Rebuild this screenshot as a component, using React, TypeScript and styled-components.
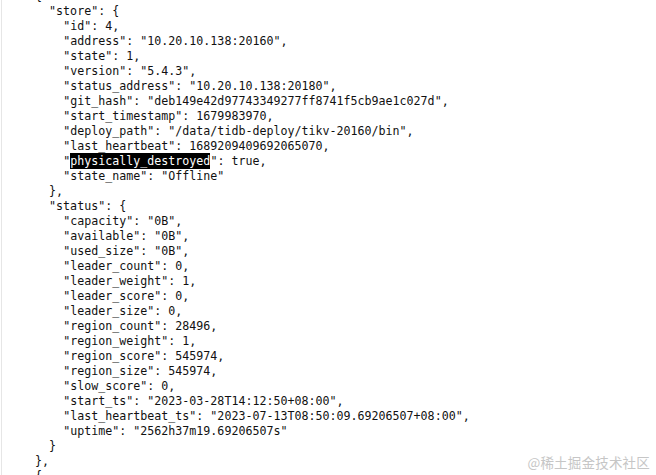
import React from "react";
import styled, { createGlobalStyle } from "styled-components";

const Global = createGlobalStyle`
  html, body { margin: 0; padding: 0; background: #ffffff; }
  #root { width: 656px; height: 475px; }
`;

const Viewer = styled.div`
  position: relative;
  width: 656px;
  height: 475px;
  overflow: hidden;
  background: #ffffff;
  box-sizing: border-box;
  border-left: 1px solid transparent;
  display: flex;
`;

const Rule = styled.div`
  width: 1px;
  background: #e6e6e6;
  flex: none;
`;

const Code = styled.div`
  flex: 1;
  margin-top: -11.5px;
  padding-left: 33px;
  font-family: "DejaVu Sans Mono", "Liberation Mono", monospace;
  font-size: 11.65px;
  line-height: 15px;
  color: #111111;
  white-space: pre;
`;

const Line = styled.div<{ $indent: number }>`
  height: 15px;
  padding-left: ${(p) => p.$indent * 14.1}px;
`;

const Selected = styled.span`
  background: #000000;
  color: #ffffff;
  padding: 1px 0;
`;

const Watermark = styled.div`
  position: absolute;
  right: 6px;
  bottom: 3px;
  font-family: "Noto Sans CJK SC", "Noto Sans", sans-serif;
  font-size: 13.5px;
  color: #c6c6c6;
  letter-spacing: 0.2px;
`;

type L = { i: number; t: React.ReactNode };

const lines: L[] = [
  { i: 0, t: "{" },
  { i: 1, t: '"store": {' },
  { i: 2, t: '"id": 4,' },
  { i: 2, t: '"address": "10.20.10.138:20160",' },
  { i: 2, t: '"state": 1,' },
  { i: 2, t: '"version": "5.4.3",' },
  { i: 2, t: '"status_address": "10.20.10.138:20180",' },
  { i: 2, t: '"git_hash": "deb149e42d97743349277ff8741f5cb9ae1c027d",' },
  { i: 2, t: '"start_timestamp": 1679983970,' },
  { i: 2, t: '"deploy_path": "/data/tidb-deploy/tikv-20160/bin",' },
  { i: 2, t: '"last_heartbeat": 1689209409692065070,' },
  {
    i: 2,
    t: (
      <>
        "<Selected>physically_destroyed</Selected>": true,
      </>
    ),
  },
  { i: 2, t: '"state_name": "Offline"' },
  { i: 1, t: "}," },
  { i: 1, t: '"status": {' },
  { i: 2, t: '"capacity": "0B",' },
  { i: 2, t: '"available": "0B",' },
  { i: 2, t: '"used_size": "0B",' },
  { i: 2, t: '"leader_count": 0,' },
  { i: 2, t: '"leader_weight": 1,' },
  { i: 2, t: '"leader_score": 0,' },
  { i: 2, t: '"leader_size": 0,' },
  { i: 2, t: '"region_count": 28496,' },
  { i: 2, t: '"region_weight": 1,' },
  { i: 2, t: '"region_score": 545974,' },
  { i: 2, t: '"region_size": 545974,' },
  { i: 2, t: '"slow_score": 0,' },
  { i: 2, t: '"start_ts": "2023-03-28T14:12:50+08:00",' },
  { i: 2, t: '"last_heartbeat_ts": "2023-07-13T08:50:09.69206507+08:00",' },
  { i: 2, t: '"uptime": "2562h37m19.69206507s"' },
  { i: 1, t: "}" },
  { i: 0, t: "}," },
  { i: 0, t: "{" },
];

export default function App() {
  return (
    <>
      <Global />
      <Viewer>
        <Rule />
        <Code>
          {lines.map((l, k) => (
            <Line key={k} $indent={l.i}>
              {l.t}
            </Line>
          ))}
        </Code>
        <Watermark>@稀土掘金技术社区</Watermark>
      </Viewer>
    </>
  );
}
